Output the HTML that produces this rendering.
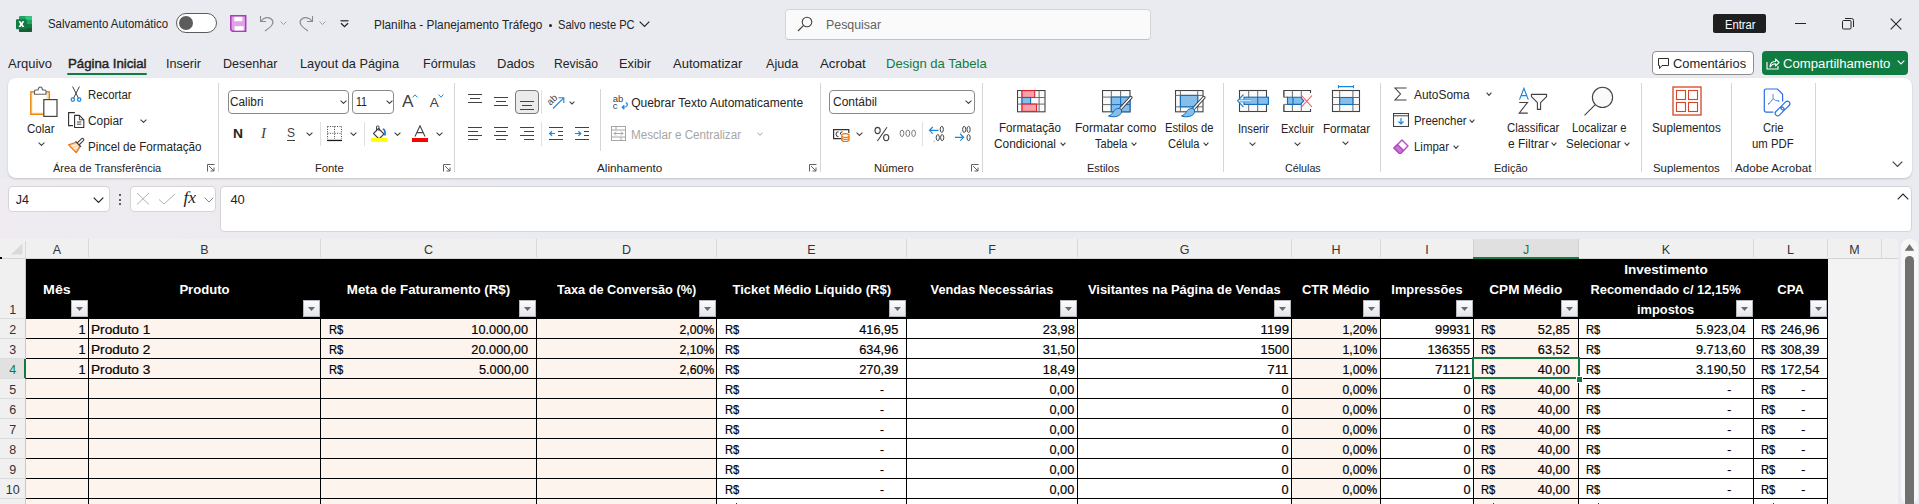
<!DOCTYPE html>
<html><head><meta charset="utf-8">
<style>
html,body{margin:0;padding:0;}
body{width:1919px;height:504px;overflow:hidden;position:relative;background:#e9ebf1;font-family:"Liberation Sans",sans-serif;}
.t{position:absolute;white-space:nowrap;line-height:1;}
.d{-webkit-text-stroke:0.2px #000;}
.r{position:absolute;}
</style></head><body>
<svg class="r" style="left:16px;top:15px;" width="17" height="17" viewBox="0 0 17 17">
<rect x="3" y="1" width="13" height="16" rx="1" fill="#21a366"/>
<rect x="9.5" y="1" width="6.5" height="4" fill="#33c481"/>
<rect x="3" y="9" width="13" height="4" fill="#107c41"/>
<path d="M3 13 H16 V16 Q16 17 15 17 H4 Q3 17 3 16 Z" fill="#185c37"/>
<rect x="0" y="4.2" width="10.8" height="10" rx="0.8" fill="#107c41"/>
<path d="M2.5 6.3 H4.6 L5.4 8 L6.2 6.3 H8.3 L6.6 9.2 L8.3 12.1 H6.2 L5.4 10.4 L4.6 12.1 H2.5 L4.2 9.2 Z" fill="#fff"/>
</svg>
<span class="t" style="left:48.00px;top:18.44px;font-size:12px;color:#242424;transform:scaleX(0.9519);transform-origin:left;">Salvamento Automático</span>
<div class="r" style="left:176px;top:13px;width:41px;height:20px;background:#fff;border:1px solid #5c5c5c;border-radius:10px;box-sizing:border-box;"></div>
<div class="r" style="left:179px;top:16px;width:14px;height:14px;background:#5c5c5c;border-radius:50%;"></div>
<svg class="r" style="left:230px;top:15px;" width="17" height="17" viewBox="0 0 17 17">
<path d="M0.8 0.8 H15.7 V16.2 H2.3 L0.8 14.7 Z" fill="#dfa3e6" stroke="#a93bb8" stroke-width="1.5"/>
<rect x="4.3" y="1.8" width="8" height="4.4" fill="#fff"/>
<rect x="4.6" y="11.2" width="9" height="4.3" fill="#fff"/>
</svg>
<svg class="r" style="left:259px;top:15px;" width="16" height="17" viewBox="0 0 16 17"><path d="M1.5 1 V6.5 H7" fill="none" stroke="#8a8a8a" stroke-width="1.1"/><path d="M1.8 6.3 C5 2 10 1.5 12.8 4.5 C15.5 7.5 13.5 11 6 16" fill="none" stroke="#8a8a8a" stroke-width="1.1"/></svg>
<svg class="r" style="left:280px;top:21px;" width="7" height="4" viewBox="0 0 7 4"><path d="M0.5 0.5 L3.5 3.5 L6.5 0.5" fill="none" stroke="#a0a0a0" stroke-width="1"/></svg>
<svg class="r" style="left:298px;top:15px;" width="16" height="17" viewBox="0 0 16 17"><path d="M14.5 1 V6.5 H9" fill="none" stroke="#8a8a8a" stroke-width="1.1"/><path d="M14.2 6.3 C11 2 6 1.5 3.2 4.5 C0.5 7.5 2.5 11 10 16" fill="none" stroke="#8a8a8a" stroke-width="1.1"/></svg>
<svg class="r" style="left:319px;top:21px;" width="7" height="4" viewBox="0 0 7 4"><path d="M0.5 0.5 L3.5 3.5 L6.5 0.5" fill="none" stroke="#a0a0a0" stroke-width="1"/></svg>
<svg class="r" style="left:340px;top:20px;" width="9" height="8" viewBox="0 0 9 8"><path d="M0.5 0.8 H8.5" stroke="#242424" stroke-width="1.2"/><path d="M1 3.2 L4.5 6.7 L8 3.2" fill="none" stroke="#242424" stroke-width="1.3"/></svg>
<span class="t" style="left:374.20px;top:18.62px;font-size:12.5px;color:#242424;transform:scaleX(0.9462);transform-origin:left;">Planilha - Planejamento Tráfego</span>
<div class="r" style="left:548.9px;top:24px;width:3px;height:3px;background:#242424;border-radius:50%;"></div>
<span class="t" style="left:558.10px;top:18.62px;font-size:12.5px;color:#242424;transform:scaleX(0.8891);transform-origin:left;">Salvo neste PC</span>
<svg class="r" style="left:639px;top:21px;" width="11" height="7" viewBox="0 0 11 7"><path d="M0.7 0.7 L5.5 5.5 L10.3 0.7" fill="none" stroke="#242424" stroke-width="1.2"/></svg>
<div class="r" style="left:785px;top:9px;width:366px;height:31px;background:#fafafa;border:1px solid #d6d6d6;border-bottom-color:#c2c2c2;border-radius:4px;box-sizing:border-box;"></div>
<svg class="r" style="left:797px;top:16px;" width="16" height="16" viewBox="0 0 16 16"><circle cx="10" cy="6" r="4.8" fill="none" stroke="#424242" stroke-width="1.1"/><path d="M6.6 9.4 L1 15" stroke="#424242" stroke-width="1.2"/></svg>
<span class="t" style="left:826.00px;top:18.72px;font-size:12.5px;color:#616161;transform:scaleX(0.9895);transform-origin:left;">Pesquisar</span>
<div class="r" style="left:1713px;top:14px;width:53px;height:19px;background:#1f1f1f;border-radius:2px;"></div>
<span class="t" style="left:1724.60px;top:19.14px;font-size:12px;color:#ffffff;transform:scaleX(0.9304);transform-origin:left;">Entrar</span>
<div class="r" style="left:1795px;top:23px;width:11px;height:1px;background:#242424;"></div>
<svg class="r" style="left:1842px;top:18px;" width="12" height="12" viewBox="0 0 12 12"><rect x="0.5" y="2.5" width="8.5" height="8.5" rx="1" fill="none" stroke="#242424" stroke-width="1"/><path d="M3 0.5 H9.5 Q11.5 0.5 11.5 2.5 V9" fill="none" stroke="#242424" stroke-width="1"/></svg>
<svg class="r" style="left:1890px;top:18px;" width="12" height="12" viewBox="0 0 12 12"><path d="M0.7 0.7 L11.3 11.3 M11.3 0.7 L0.7 11.3" stroke="#242424" stroke-width="1.1"/></svg>
<span class="t" style="left:8.00px;top:56.70px;font-size:13px;color:#242424;">Arquivo</span>
<span class="t" style="left:67.50px;top:56.70px;font-size:13px;color:#242424;transform:scaleX(1.0152);transform-origin:left;-webkit-text-stroke:0.45px #242424;">Página Inicial</span>
<span class="t" style="left:166.00px;top:56.70px;font-size:13px;color:#242424;transform:scaleX(0.9691);transform-origin:left;">Inserir</span>
<span class="t" style="left:223.00px;top:56.70px;font-size:13px;color:#242424;transform:scaleX(0.9669);transform-origin:left;">Desenhar</span>
<span class="t" style="left:300.00px;top:56.70px;font-size:13px;color:#242424;transform:scaleX(0.9784);transform-origin:left;">Layout da Página</span>
<span class="t" style="left:422.50px;top:56.70px;font-size:13px;color:#242424;transform:scaleX(0.9691);transform-origin:left;">Fórmulas</span>
<span class="t" style="left:497.00px;top:56.70px;font-size:13px;color:#242424;">Dados</span>
<span class="t" style="left:554.00px;top:56.70px;font-size:13px;color:#242424;transform:scaleX(0.9369);transform-origin:left;">Revisão</span>
<span class="t" style="left:619.00px;top:56.70px;font-size:13px;color:#242424;transform:scaleX(0.9844);transform-origin:left;">Exibir</span>
<span class="t" style="left:673.00px;top:56.70px;font-size:13px;color:#242424;">Automatizar</span>
<span class="t" style="left:765.70px;top:56.70px;font-size:13px;color:#242424;transform:scaleX(0.9715);transform-origin:left;">Ajuda</span>
<span class="t" style="left:820.00px;top:56.70px;font-size:13px;color:#242424;transform:scaleX(1.0201);transform-origin:left;">Acrobat</span>
<span class="t" style="left:886.00px;top:56.70px;font-size:13px;color:#107c41;transform:scaleX(1.0053);transform-origin:left;">Design da Tabela</span>
<div class="r" style="left:67px;top:73px;width:80px;height:2px;background:#107c41;border-radius:1px;"></div>
<div class="r" style="left:1652px;top:51px;width:102px;height:24px;background:#ffffff;border:1px solid #8f8f8f;border-radius:4px;box-sizing:border-box;"></div>
<svg class="r" style="left:1657px;top:57px;" width="13" height="13" viewBox="0 0 13 13"><path d="M1.5 1.5 H11.5 V8.5 H5 L2.5 11.5 V8.5 H1.5 Z" fill="none" stroke="#242424" stroke-width="0.95"/></svg>
<span class="t" style="left:1673.40px;top:57.92px;font-size:12.5px;color:#242424;transform:scaleX(1.0316);transform-origin:left;">Comentários</span>
<div class="r" style="left:1762px;top:51px;width:146px;height:24px;background:#107c41;border-radius:4px;"></div>
<svg class="r" style="left:1766px;top:57px;" width="14" height="13" viewBox="0 0 14 13"><path d="M1 5 V12 H12 V9" fill="none" stroke="#fff" stroke-width="1.1"/><path d="M4 10 C4 6 6.5 4.5 9.5 4.5 V2 L13 5.5 L9.5 9 V6.7 C7 6.7 5.5 7.5 4 10 Z" fill="none" stroke="#fff" stroke-width="1.1" stroke-linejoin="round"/></svg>
<span class="t" style="left:1783.20px;top:57.92px;font-size:12.5px;color:#ffffff;transform:scaleX(1.0517);transform-origin:left;">Compartilhamento</span>
<svg class="r" style="left:1897px;top:60px;" width="8" height="5" viewBox="0 0 8 5"><path d="M0.7 0.7 L4 4 L7.3 0.7" fill="none" stroke="#fff" stroke-width="1.2"/></svg>
<div class="r" style="left:0px;top:178px;width:700px;height:61px;background:linear-gradient(90deg, rgba(244,236,240,.55), rgba(244,236,240,0));"></div>
<div class="r" style="left:8px;top:78px;width:1904px;height:100px;background:#ffffff;border-radius:8px;box-shadow:0 1px 2px rgba(0,0,0,.18);"></div>
<div class="r" style="left:218px;top:83px;width:1px;height:89px;background:#d6d6d6;"></div>
<div class="r" style="left:454px;top:83px;width:1px;height:89px;background:#d6d6d6;"></div>
<div class="r" style="left:600px;top:89px;width:1px;height:62px;background:#d6d6d6;"></div>
<div class="r" style="left:820px;top:83px;width:1px;height:89px;background:#d6d6d6;"></div>
<div class="r" style="left:982px;top:83px;width:1px;height:89px;background:#d6d6d6;"></div>
<div class="r" style="left:1223px;top:83px;width:1px;height:89px;background:#d6d6d6;"></div>
<div class="r" style="left:1380px;top:83px;width:1px;height:89px;background:#d6d6d6;"></div>
<div class="r" style="left:1641px;top:83px;width:1px;height:89px;background:#d6d6d6;"></div>
<div class="r" style="left:1731px;top:83px;width:1px;height:89px;background:#d6d6d6;"></div>
<div class="r" style="left:1815px;top:83px;width:1px;height:89px;background:#d6d6d6;"></div>
<svg class="r" style="left:29px;top:86px;" width="29" height="31" viewBox="0 0 29 31">
<rect x="1.8" y="5.8" width="18.5" height="22.5" fill="#fde3b8" stroke="#e8860f" stroke-width="1.4"/>
<rect x="3.5" y="7.5" width="14" height="19" fill="#fff"/>
<path d="M5.5 8.2 V5 Q5.5 4 6.5 4 H9 Q9.5 1 11.3 1 Q13.2 1 13.6 4 H16 Q17 4 17 5 V8.2 Z" fill="#fff" stroke="#616161" stroke-width="1.1"/>
<rect x="14.8" y="13.6" width="13.2" height="16.8" fill="#fff" stroke="#424242" stroke-width="1.2"/>
</svg>
<span class="t" style="left:27.40px;top:122.84px;font-size:12px;color:#242424;transform:scaleX(0.9625);transform-origin:left;">Colar</span>
<svg class="r" style="left:38px;top:142px;" width="7" height="4" viewBox="0 0 7 4"><path d="M0.6 0.6 L3.5 3.4 L6.4 0.6" fill="none" stroke="#424242" stroke-width="1.1"/></svg>
<svg class="r" style="left:70px;top:86px;" width="12" height="16" viewBox="0 0 12 16">
<path d="M2.6 0.5 L8.6 12.5 M9.4 0.5 L3.4 12.5" stroke="#424242" stroke-width="1" fill="none"/>
<circle cx="2.8" cy="13.6" r="1.7" fill="none" stroke="#1a86d9" stroke-width="1.2"/>
<circle cx="9.2" cy="13.6" r="1.7" fill="none" stroke="#1a86d9" stroke-width="1.2"/>
</svg>
<span class="t" style="left:88.30px;top:89.34px;font-size:12px;color:#242424;transform:scaleX(0.9454);transform-origin:left;">Recortar</span>
<svg class="r" style="left:62px;top:108px;" width="30" height="50" viewBox="0 0 30 50">
<g transform="translate(-62 -108)">
<path d="M74.9 112.6 H68.6 V125.6 H73" fill="none" stroke="#303030" stroke-width="1.1"/>
<path d="M74.6 115.4 H79.4 L83.8 119.8 V127.5 H74.6 Z" fill="#fff" stroke="#303030" stroke-width="1.1" stroke-linejoin="round"/>
<path d="M79.4 115.4 V119.8 H83.8 M76.9 122 H81.3 M76.9 124.2 H81.3" fill="none" stroke="#303030" stroke-width=".9"/>
</g>
<g transform="translate(-62 -108)">
<path d="M68.6 144.8 L76.4 142.2 L80.2 146.4 L76.2 152.6 Z" fill="#fbd3a8" stroke="#e8700a" stroke-width="1.2" stroke-linejoin="round"/>
<path d="M71.5 146.2 L77.5 144.8 M73.5 149 L78 146.8" stroke="#fff" stroke-width="1"/>
<path d="M77 143.2 L81.5 138.8 Q82.6 137.9 83.5 138.8 Q84.3 139.7 83.4 140.7 L79 145" fill="#fff" stroke="#424242" stroke-width="1.1" stroke-linejoin="round"/>
<path d="M75.6 141.4 L81 146.8" stroke="#424242" stroke-width="1.2"/>
</g>
</svg>
<span class="t" style="left:88.30px;top:115.04px;font-size:12px;color:#242424;transform:scaleX(0.9902);transform-origin:left;">Copiar</span>
<svg class="r" style="left:140px;top:119px;" width="7" height="4" viewBox="0 0 7 4"><path d="M0.6 0.6 L3.5 3.4 L6.4 0.6" fill="none" stroke="#424242" stroke-width="1.1"/></svg>
<span class="t" style="left:88.30px;top:141.04px;font-size:12px;color:#242424;transform:scaleX(0.9724);transform-origin:left;">Pincel de Formatação</span>
<span class="t" style="left:53.00px;top:162.69px;font-size:11px;color:#242424;">Área de Transferência</span>
<svg class="r" style="left:207px;top:164px;" width="8" height="8" viewBox="0 0 8 8"><path d="M0.5 7.5 V0.5 H7.5 M2 2 L7 7 M7 3.5 V7 H3.5" fill="none" stroke="#616161" stroke-width="1"/></svg>
<div class="r" style="left:228px;top:90px;width:121px;height:24px;background:#fff;border:1px solid #8a8a8a;border-radius:4px;box-sizing:border-box;"></div>
<span class="t" style="left:230.40px;top:96.34px;font-size:12px;color:#242424;transform:scaleX(0.9851);transform-origin:left;">Calibri</span>
<svg class="r" style="left:340px;top:100px;" width="7" height="4" viewBox="0 0 7 4"><path d="M0.6 0.6 L3.5 3.4 L6.4 0.6" fill="none" stroke="#424242" stroke-width="1.1"/></svg>
<div class="r" style="left:352px;top:90px;width:42px;height:24px;background:#fff;border:1px solid #8a8a8a;border-radius:4px;box-sizing:border-box;"></div>
<span class="t" style="left:355.80px;top:95.92px;font-size:12.5px;color:#242424;transform:scaleX(0.8478);transform-origin:left;">11</span>
<svg class="r" style="left:386px;top:100px;" width="7" height="4" viewBox="0 0 7 4"><path d="M0.6 0.6 L3.5 3.4 L6.4 0.6" fill="none" stroke="#424242" stroke-width="1.1"/></svg>
<span class="t" style="left:402.00px;top:92.61px;font-size:17px;color:#424242;transform:scaleX(1.0142);transform-origin:left;">A</span>
<svg class="r" style="left:412px;top:94px;" width="6" height="4" viewBox="0 0 6 4"><path d="M0.6 3.4 L3 0.8 L5.4 3.4" fill="none" stroke="#1a86d9" stroke-width="1"/></svg>
<span class="t" style="left:429.80px;top:95.57px;font-size:13.5px;color:#424242;">A</span>
<svg class="r" style="left:438px;top:94px;" width="6" height="4" viewBox="0 0 6 4"><path d="M0.6 0.6 L3 3.2 L5.4 0.6" fill="none" stroke="#1a86d9" stroke-width="1"/></svg>
<span class="t" style="left:233.40px;top:127.00px;font-size:13px;color:#242424;font-weight:bold;transform:scaleX(1.0651);transform-origin:left;">N</span>
<span class="t" style="left:261px;top:125.5px;font-size:15px;color:#424242;font-family:'Liberation Serif',serif;font-style:italic;">I</span>
<span class="t" style="left:287.00px;top:127.02px;font-size:12.5px;color:#424242;transform:scaleX(0.9595);transform-origin:left;">S</span>
<div class="r" style="left:287px;top:140px;width:8px;height:1px;background:#424242;"></div>
<svg class="r" style="left:306px;top:132px;" width="7" height="4" viewBox="0 0 7 4"><path d="M0.6 0.6 L3.5 3.4 L6.4 0.6" fill="none" stroke="#424242" stroke-width="1.1"/></svg>
<div class="r" style="left:320px;top:122px;width:1px;height:24px;background:#e0e0e0;"></div>
<svg class="r" style="left:326px;top:125px;" width="17" height="17" viewBox="0 0 17 17">
<path d="M1.5 1.5 H15.5 M1.5 8.3 H15.5 M1.5 1.5 V14 M8.5 1.5 V14 M15.5 1.5 V14" fill="none" stroke="#424242" stroke-width="1" stroke-dasharray="1 1.4"/>
<rect x="1" y="14.8" width="15" height="1.3" fill="#1a1a1a"/>
</svg>
<svg class="r" style="left:350px;top:132px;" width="7" height="4" viewBox="0 0 7 4"><path d="M0.6 0.6 L3.5 3.4 L6.4 0.6" fill="none" stroke="#424242" stroke-width="1.1"/></svg>
<div class="r" style="left:364px;top:122px;width:1px;height:24px;background:#e0e0e0;"></div>
<svg class="r" style="left:371px;top:125px;" width="17" height="17" viewBox="0 0 17 17">
<path d="M2.5 8.5 L7.5 3.5 L13 9 L8 14 Z" fill="#fff" stroke="#424242" stroke-width="1.1" stroke-linejoin="round"/>
<path d="M5.5 5.5 V2 Q5.5 0.8 6.7 0.8 Q8 0.8 8 2 V6" fill="none" stroke="#424242" stroke-width="1"/>
<path d="M11.8 4 Q14 4.5 14 7.5 V10.5" fill="none" stroke="#1a6fc0" stroke-width="1.6"/>
<rect x="0" y="13" width="16" height="3.8" fill="#ffff00"/>
</svg>
<svg class="r" style="left:394px;top:132px;" width="7" height="4" viewBox="0 0 7 4"><path d="M0.6 0.6 L3.5 3.4 L6.4 0.6" fill="none" stroke="#424242" stroke-width="1.1"/></svg>
<svg class="r" style="left:414px;top:125px;" width="12" height="12" viewBox="0 0 12 12"><path d="M1 11.5 L6 0.8 L11 11.5 M2.8 7.6 H9.2" fill="none" stroke="#424242" stroke-width="1.1"/></svg>
<div class="r" style="left:412px;top:138px;width:16px;height:4px;background:#ff0000;"></div>
<svg class="r" style="left:436px;top:132px;" width="7" height="4" viewBox="0 0 7 4"><path d="M0.6 0.6 L3.5 3.4 L6.4 0.6" fill="none" stroke="#424242" stroke-width="1.1"/></svg>
<span class="t" style="left:314.60px;top:162.69px;font-size:11px;color:#242424;transform:scaleX(1.0204);transform-origin:left;">Fonte</span>
<svg class="r" style="left:443px;top:164px;" width="8" height="8" viewBox="0 0 8 8"><path d="M0.5 7.5 V0.5 H7.5 M2 2 L7 7 M7 3.5 V7 H3.5" fill="none" stroke="#616161" stroke-width="1"/></svg>
<div class="r" style="left:468px;top:94px;width:14px;height:1px;background:#424242;"></div>
<div class="r" style="left:470px;top:98px;width:10px;height:1px;background:#424242;"></div>
<div class="r" style="left:468px;top:102px;width:14px;height:1px;background:#424242;"></div>
<div class="r" style="left:494px;top:97px;width:14px;height:1px;background:#424242;"></div>
<div class="r" style="left:496px;top:101px;width:10px;height:1px;background:#424242;"></div>
<div class="r" style="left:494px;top:105px;width:14px;height:1px;background:#424242;"></div>
<div class="r" style="left:515px;top:90px;width:24px;height:24px;background:#ebebeb;border:1px solid #7a7a7a;border-radius:4px;box-sizing:border-box;"></div>
<div class="r" style="left:520px;top:101px;width:14px;height:1px;background:#424242;"></div>
<div class="r" style="left:522px;top:105px;width:10px;height:1px;background:#424242;"></div>
<div class="r" style="left:520px;top:109px;width:14px;height:1px;background:#424242;"></div>
<div class="r" style="left:541px;top:90px;width:1px;height:24px;background:#e0e0e0;"></div>
<svg class="r" style="left:546px;top:92px;" width="20" height="17" viewBox="0 0 20 17">
<text x="1" y="11" font-family="Liberation Sans" font-size="9.5" fill="#424242" transform="rotate(-45 6 8)">ab</text>
<path d="M7 16.5 L17.8 5.8 M12.5 5.8 H17.8 V11" fill="none" stroke="#1a86d9" stroke-width="1.1"/>
</svg>
<svg class="r" style="left:569px;top:101px;" width="6" height="3.5" viewBox="0 0 6 3.5"><path d="M0.6 0.6 L3.0 2.9 L5.4 0.6" fill="none" stroke="#424242" stroke-width="1.1"/></svg>
<div class="r" style="left:468px;top:127px;width:14px;height:1px;background:#424242;"></div>
<div class="r" style="left:468px;top:131px;width:10px;height:1px;background:#424242;"></div>
<div class="r" style="left:468px;top:135px;width:14px;height:1px;background:#424242;"></div>
<div class="r" style="left:468px;top:139px;width:10px;height:1px;background:#424242;"></div>
<div class="r" style="left:494px;top:127px;width:14px;height:1px;background:#424242;"></div>
<div class="r" style="left:496px;top:131px;width:10px;height:1px;background:#424242;"></div>
<div class="r" style="left:494px;top:135px;width:14px;height:1px;background:#424242;"></div>
<div class="r" style="left:496px;top:139px;width:10px;height:1px;background:#424242;"></div>
<div class="r" style="left:520px;top:127px;width:14px;height:1px;background:#424242;"></div>
<div class="r" style="left:524px;top:131px;width:10px;height:1px;background:#424242;"></div>
<div class="r" style="left:520px;top:135px;width:14px;height:1px;background:#424242;"></div>
<div class="r" style="left:524px;top:139px;width:10px;height:1px;background:#424242;"></div>
<div class="r" style="left:541px;top:122px;width:1px;height:24px;background:#e0e0e0;"></div>
<div class="r" style="left:549px;top:127px;width:14px;height:1px;background:#424242;"></div>
<div class="r" style="left:558px;top:131px;width:5px;height:1px;background:#424242;"></div>
<div class="r" style="left:558px;top:135px;width:5px;height:1px;background:#424242;"></div>
<div class="r" style="left:549px;top:139px;width:14px;height:1px;background:#424242;"></div>
<div class="r" style="left:575px;top:127px;width:14px;height:1px;background:#424242;"></div>
<div class="r" style="left:584px;top:131px;width:5px;height:1px;background:#424242;"></div>
<div class="r" style="left:584px;top:135px;width:5px;height:1px;background:#424242;"></div>
<div class="r" style="left:575px;top:139px;width:14px;height:1px;background:#424242;"></div>
<svg class="r" style="left:546px;top:128px;" width="50" height="12" viewBox="0 0 50 12">
<path d="M9 5.5 H3.8 M6 3.2 L3.6 5.5 L6 7.8" fill="none" stroke="#1a86d9" stroke-width="1.2"/>
<path d="M29 5.5 H34.6 M32.4 3.2 L34.8 5.5 L32.4 7.8" fill="none" stroke="#1a86d9" stroke-width="1.2"/>
</svg>
<svg class="r" style="left:612px;top:93px;" width="17" height="17" viewBox="0 0 17 17">
<text x="0.8" y="8.5" font-family="Liberation Sans" font-size="9.5" fill="#424242">ab</text>
<text x="0.8" y="15.8" font-family="Liberation Sans" font-size="9.5" fill="#424242">c</text>
<path d="M13.8 9.5 Q16 10.5 15 12.8 Q14 14.5 10.5 14.3 M12.3 12.3 L10.2 14.3 L12.3 16.3" fill="none" stroke="#1a86d9" stroke-width="1.2"/>
</svg>
<span class="t" style="left:631.20px;top:97.14px;font-size:12px;color:#242424;">Quebrar Texto Automaticamente</span>
<svg class="r" style="left:611px;top:126px;" width="15" height="15" viewBox="0 0 15 15">
<rect x="0.5" y="0.5" width="14" height="14" fill="none" stroke="#a6a6a6" stroke-width="1"/>
<path d="M0.5 4 H14.5 M0.5 11 H14.5 M5 0.5 V4 M10 11 V14.5 M3 7.5 H12 M5 5.5 L3 7.5 L5 9.5 M10 5.5 L12 7.5 L10 9.5" fill="none" stroke="#a6a6a6" stroke-width="1"/>
</svg>
<span class="t" style="left:631.20px;top:129.14px;font-size:12px;color:#a6a6a6;transform:scaleX(0.9704);transform-origin:left;">Mesclar e Centralizar</span>
<svg class="r" style="left:757px;top:132px;" width="6" height="4" viewBox="0 0 6 4"><path d="M0.6 0.6 L3.0 3.4 L5.4 0.6" fill="none" stroke="#a6a6a6" stroke-width="1"/></svg>
<span class="t" style="left:597.00px;top:162.69px;font-size:11px;color:#242424;transform:scaleX(1.0679);transform-origin:left;">Alinhamento</span>
<svg class="r" style="left:809px;top:164px;" width="8" height="8" viewBox="0 0 8 8"><path d="M0.5 7.5 V0.5 H7.5 M2 2 L7 7 M7 3.5 V7 H3.5" fill="none" stroke="#616161" stroke-width="1"/></svg>
<div class="r" style="left:829px;top:90px;width:146px;height:24px;background:#fff;border:1px solid #8a8a8a;border-radius:4px;box-sizing:border-box;"></div>
<span class="t" style="left:832.50px;top:95.92px;font-size:12.5px;color:#242424;transform:scaleX(0.9595);transform-origin:left;">Contábil</span>
<svg class="r" style="left:965px;top:100px;" width="7" height="4" viewBox="0 0 7 4"><path d="M0.6 0.6 L3.5 3.4 L6.4 0.6" fill="none" stroke="#424242" stroke-width="1.1"/></svg>
<svg class="r" style="left:826px;top:120px;" width="150" height="30" viewBox="0 0 150 30">
<g transform="translate(-826 -120)">
<path d="M841.5 138.6 H833.6 V129.6 H848.8 V133" fill="none" stroke="#303030" stroke-width="1.2"/>
<path d="M838.5 131.8 Q836 131.6 836 134.2 Q836 136.8 838.5 136.6 M842.5 131.8 Q840.3 131.6 840.3 134.5" fill="none" stroke="#303030" stroke-width="1"/>
<path d="M841.8 134.6 Q845.4 132.6 849 134.6 V140.4 Q845.4 142.6 841.8 140.4 Z" fill="#fff" stroke="#e8700a" stroke-width="1.2"/>
<path d="M841.8 136.6 Q845.4 138.6 849 136.6 M841.8 138.5 Q845.4 140.5 849 138.5" fill="none" stroke="#e8700a" stroke-width="1.1"/>
</g>
<g transform="translate(-826 -120)">
<ellipse cx="877.6" cy="130.5" rx="2.6" ry="3.1" fill="none" stroke="#424242" stroke-width="1.1"/>
<ellipse cx="886.2" cy="137.6" rx="2.6" ry="3.1" fill="none" stroke="#424242" stroke-width="1.1"/>
<path d="M887 127.2 L877.4 141" stroke="#424242" stroke-width="1.1"/>
</g>
<g transform="translate(-826 -120)" fill="none" stroke="#7a7a7a" stroke-width="1">
<ellipse cx="902" cy="133.3" rx="1.9" ry="3.2"/><ellipse cx="907.8" cy="133.3" rx="1.9" ry="3.2"/><ellipse cx="913.6" cy="133.3" rx="1.9" ry="3.2"/>
</g>
<g transform="translate(-826 -120)" fill="none" stroke="#424242" stroke-width="1">
<ellipse cx="941.8" cy="129.4" rx="1.6" ry="3"/>
<ellipse cx="937.8" cy="137.6" rx="1.6" ry="3"/><ellipse cx="942.2" cy="137.6" rx="1.6" ry="3"/>
<path d="M934.7 140.8 L934.2 141.5"/>
<ellipse cx="964.2" cy="129.4" rx="1.6" ry="3"/><ellipse cx="968.6" cy="129.4" rx="1.6" ry="3"/>
<path d="M961.1 132.6 L960.6 133.3"/>
<ellipse cx="968.6" cy="137.6" rx="1.6" ry="3"/>
</g>
<g transform="translate(-826 -120)" fill="none" stroke="#1a86d9" stroke-width="1.2">
<path d="M938.5 130.3 H929.5 M932.8 127 L929.5 130.3 L932.8 133.6"/>
<path d="M955 137.3 H963.6 M960.3 134 L963.6 137.3 L960.3 140.6"/>
</g>
</svg>
<svg class="r" style="left:856px;top:132px;" width="7" height="4" viewBox="0 0 7 4"><path d="M0.6 0.6 L3.5 3.4 L6.4 0.6" fill="none" stroke="#424242" stroke-width="1.1"/></svg>
<div class="r" style="left:922px;top:122px;width:1px;height:24px;background:#e0e0e0;"></div>
<span class="t" style="left:873.60px;top:162.69px;font-size:11px;color:#242424;transform:scaleX(1.0148);transform-origin:left;">Número</span>
<svg class="r" style="left:971px;top:164px;" width="8" height="8" viewBox="0 0 8 8"><path d="M0.5 7.5 V0.5 H7.5 M2 2 L7 7 M7 3.5 V7 H3.5" fill="none" stroke="#616161" stroke-width="1"/></svg>
<svg class="r" style="left:1017px;top:90px;" width="29" height="23" viewBox="0 0 29 23">
<rect x="0.5" y="0.5" width="27.5" height="21.3" fill="#fafafa" stroke="#424242" stroke-width="1.1"/>
<path d="M0.5 7.5 H28 M0.5 14.1 H28 M22.1 0.5 V21.8 M5 0.5 V21.8" fill="none" stroke="#6b6b6b" stroke-width="1"/>
<rect x="5" y="0.6" width="12.7" height="6.9" fill="#f7a1a8" stroke="#e0202e" stroke-width="1.1"/>
<rect x="5" y="7.5" width="8.6" height="6.6" fill="#86bde9" stroke="#0f6cbd" stroke-width="1.1"/>
<rect x="5" y="14.1" width="14.6" height="7.3" fill="#f7a1a8" stroke="#e0202e" stroke-width="1.1"/>
</svg>
<span class="t" style="left:999.20px;top:122.14px;font-size:12px;color:#242424;transform:scaleX(0.9684);transform-origin:left;">Formatação</span>
<span class="t" style="left:993.50px;top:138.34px;font-size:12px;color:#242424;transform:scaleX(0.9888);transform-origin:left;">Condicional</span>
<svg class="r" style="left:1060px;top:142px;" width="6" height="4" viewBox="0 0 6 4"><path d="M0.6 0.6 L3.0 3.4 L5.4 0.6" fill="none" stroke="#424242" stroke-width="1.1"/></svg>
<svg class="r" style="left:1102px;top:90px;" width="31" height="28" viewBox="0 0 31 28">
<rect x="0.5" y="0.5" width="27.5" height="21.3" fill="#fafafa" stroke="#424242" stroke-width="1.1"/>
<path d="M0.5 7.1 H28 M0.5 14.6 H28 M9.3 0.5 V21.8 M18.6 0.5 V21.8" fill="none" stroke="#6b6b6b" stroke-width="1"/>
<rect x="9.3" y="7.1" width="18.7" height="14.7" fill="#86bde9" stroke="#0f6cbd" stroke-width="1.1"/>
<path d="M9.3 14.6 H28 M18.6 7.1 V21.8" stroke="#0f6cbd" stroke-width="1"/>
<path d="M28.8 7.6 L19 18.2" stroke="#424242" stroke-width="3.4" stroke-linecap="round"/>
<path d="M28.8 7.6 L19 18.2" stroke="#fff" stroke-width="1.4" stroke-linecap="round"/>
<path d="M17.5 18.5 Q20.5 19.5 19.5 22.5 Q18 26.5 11.5 26.8 Q9 26.8 6.5 26 Q9.5 25 11 22.5 Q13 18 17.5 18.5 Z" fill="#86bde9" stroke="#0f6cbd" stroke-width="1"/>
</svg>
<span class="t" style="left:1075.00px;top:122.14px;font-size:12px;color:#242424;">Formatar como</span>
<span class="t" style="left:1094.70px;top:138.34px;font-size:12px;color:#242424;transform:scaleX(0.9192);transform-origin:left;">Tabela</span>
<svg class="r" style="left:1131px;top:142px;" width="6" height="4" viewBox="0 0 6 4"><path d="M0.6 0.6 L3.0 3.4 L5.4 0.6" fill="none" stroke="#424242" stroke-width="1.1"/></svg>
<svg class="r" style="left:1175px;top:90px;" width="31" height="28" viewBox="0 0 31 28">
<rect x="0.5" y="0.5" width="27.5" height="21.3" fill="#fafafa" stroke="#424242" stroke-width="1.1"/>
<path d="M0.5 5.4 H28 M0.5 16.8 H28 M5.4 0.5 V21.8 M22.7 0.5 V21.8" fill="none" stroke="#6b6b6b" stroke-width="1"/>
<rect x="5.4" y="5.4" width="17.3" height="11.4" fill="#86bde9" stroke="#0f6cbd" stroke-width="1.1"/>
<path d="M28.8 7.6 L19 18.2" stroke="#424242" stroke-width="3.4" stroke-linecap="round"/>
<path d="M28.8 7.6 L19 18.2" stroke="#fff" stroke-width="1.4" stroke-linecap="round"/>
<path d="M17.5 18.5 Q20.5 19.5 19.5 22.5 Q18 26.5 11.5 26.8 Q9 26.8 6.5 26 Q9.5 25 11 22.5 Q13 18 17.5 18.5 Z" fill="#86bde9" stroke="#0f6cbd" stroke-width="1"/>
</svg>
<span class="t" style="left:1164.50px;top:122.14px;font-size:12px;color:#242424;transform:scaleX(0.9323);transform-origin:left;">Estilos de</span>
<span class="t" style="left:1167.50px;top:138.34px;font-size:12px;color:#242424;transform:scaleX(0.9260);transform-origin:left;">Célula</span>
<svg class="r" style="left:1203px;top:142px;" width="6" height="4" viewBox="0 0 6 4"><path d="M0.6 0.6 L3.0 3.4 L5.4 0.6" fill="none" stroke="#424242" stroke-width="1.1"/></svg>
<span class="t" style="left:1087.00px;top:162.69px;font-size:11px;color:#242424;">Estilos</span>
<svg class="r" style="left:1230px;top:80px;" width="135" height="35" viewBox="0 0 135 35">
<g transform="translate(-1230 -80)">
<rect x="1239.5" y="90.5" width="27" height="21" fill="#fafafa" stroke="#424242" stroke-width="1.1"/>
<path d="M1248.7 90.5 V111.5 M1257.7 90.5 V111.5" stroke="#6b6b6b" stroke-width="1"/>
<rect x="1244" y="97.2" width="24.4" height="7.2" fill="#86bde9" stroke="#0f6cbd" stroke-width="1.1"/>
<path d="M1257.7 97.2 V104.4" stroke="#0f6cbd" stroke-width="1.1"/>
<path d="M1251 100.8 H1238.5" stroke="#fff" stroke-width="2.6"/>
<path d="M1251 99.8 H1239.5 M1251 101.8 H1239.5" stroke="#1a86d9" stroke-width=".8"/>
<path d="M1243.5 94.5 L1237.6 100.8 L1243.5 107" fill="none" stroke="#1a86d9" stroke-width="1.1"/>
</g>
<g transform="translate(-1230 -80)">
<path d="M1284 97.2 V90.5 H1310.5 V93 M1310.5 109 V111.5 H1284 V104.4" fill="#fafafa" stroke="#424242" stroke-width="1.1"/>
<path d="M1284 90.5 H1310.5 V111.5 H1284 Z" fill="#fafafa"/>
<path d="M1284 97.2 V90.5 H1310.5 V93 M1310.5 109 V111.5 H1284 V104.4" fill="none" stroke="#424242" stroke-width="1.1"/>
<path d="M1292.4 90.5 V111.5 M1301.3 90.5 V111.5 M1284 97.2 H1288 M1284 104.4 H1288" stroke="#6b6b6b" stroke-width="1"/>
<path d="M1287.5 97.2 H1300.5 L1303.8 100.8 L1300.5 104.4 H1287.5 Z" fill="#86bde9" stroke="#0f6cbd" stroke-width="1.1"/>
<path d="M1293 97.2 V104.4" stroke="#0f6cbd" stroke-width="1.1"/>
<path d="M1301.5 95.5 L1312 107 M1312 95.5 L1301.5 107" stroke="#f0505a" stroke-width="1.1"/>
</g>
<g transform="translate(-1230 -80)">
<path d="M1338.5 86.6 H1353.5 M1338.5 85 V88.2 M1353.5 85 V88.2" stroke="#1a86d9" stroke-width="1.1"/>
<rect x="1332.5" y="90.5" width="27" height="21" fill="#fafafa" stroke="#424242" stroke-width="1.1"/>
<path d="M1339.7 90.5 V111.5 M1352.9 90.5 V111.5 M1332.5 97.5 H1359.5 M1332.5 104.5 H1359.5" stroke="#6b6b6b" stroke-width="1"/>
<rect x="1339.7" y="97.5" width="13.2" height="7" fill="#86bde9" stroke="#0f6cbd" stroke-width="1.1"/>
</g>
</svg>
<span class="t" style="left:1237.50px;top:122.84px;font-size:12px;color:#242424;transform:scaleX(0.9299);transform-origin:left;">Inserir</span>
<svg class="r" style="left:1249px;top:142px;" width="7" height="4" viewBox="0 0 7 4"><path d="M0.6 0.6 L3.5 3.4 L6.4 0.6" fill="none" stroke="#424242" stroke-width="1.1"/></svg>
<span class="t" style="left:1280.50px;top:122.84px;font-size:12px;color:#242424;transform:scaleX(0.9165);transform-origin:left;">Excluir</span>
<svg class="r" style="left:1294px;top:142px;" width="7" height="4" viewBox="0 0 7 4"><path d="M0.6 0.6 L3.5 3.4 L6.4 0.6" fill="none" stroke="#424242" stroke-width="1.1"/></svg>
<span class="t" style="left:1322.80px;top:122.84px;font-size:12px;color:#242424;transform:scaleX(0.9657);transform-origin:left;">Formatar</span>
<svg class="r" style="left:1342px;top:141px;" width="7" height="4" viewBox="0 0 7 4"><path d="M0.6 0.6 L3.5 3.4 L6.4 0.6" fill="none" stroke="#424242" stroke-width="1.1"/></svg>
<span class="t" style="left:1284.50px;top:162.69px;font-size:11px;color:#242424;transform:scaleX(0.9732);transform-origin:left;">Células</span>
<svg class="r" style="left:1394px;top:87px;" width="13" height="14" viewBox="0 0 13 14"><path d="M12.5 1 H1 L6.5 7 L1 13 H12.5" fill="none" stroke="#424242" stroke-width="1.1"/></svg>
<span class="t" style="left:1413.50px;top:88.84px;font-size:12px;color:#242424;transform:scaleX(0.9905);transform-origin:left;">AutoSoma</span>
<svg class="r" style="left:1486px;top:92px;" width="6" height="4" viewBox="0 0 6 4"><path d="M0.6 0.6 L3.0 3.4 L5.4 0.6" fill="none" stroke="#424242" stroke-width="1.1"/></svg>
<svg class="r" style="left:1393px;top:113px;" width="16" height="14" viewBox="0 0 16 14">
<rect x="0.5" y="0.5" width="15" height="13" fill="#fff" stroke="#424242" stroke-width="1.1"/>
<path d="M0.5 2.8 H15.5" stroke="#424242" stroke-width="1"/>
<path d="M8 5 V11 M5.5 8.5 L8 11 L10.5 8.5" fill="none" stroke="#1a86d9" stroke-width="1.2"/>
</svg>
<span class="t" style="left:1413.50px;top:115.34px;font-size:12px;color:#242424;transform:scaleX(0.9483);transform-origin:left;">Preencher</span>
<svg class="r" style="left:1469px;top:119px;" width="6" height="4" viewBox="0 0 6 4"><path d="M0.6 0.6 L3.0 3.4 L5.4 0.6" fill="none" stroke="#424242" stroke-width="1.1"/></svg>
<svg class="r" style="left:1393px;top:138px;" width="16" height="16" viewBox="0 0 16 16">
<path d="M1 10 L9 2 L15 8 L7 16 Z" fill="#fff" stroke="#b146c2" stroke-width="1.3" stroke-linejoin="round"/>
<path d="M1 10 L4.5 6.5 L10.5 12.5 L7 16 Z" fill="#c773d3" stroke="#b146c2" stroke-width="1.3" stroke-linejoin="round"/>
</svg>
<span class="t" style="left:1413.50px;top:140.84px;font-size:12px;color:#242424;transform:scaleX(0.9543);transform-origin:left;">Limpar</span>
<svg class="r" style="left:1453px;top:145px;" width="6" height="4" viewBox="0 0 6 4"><path d="M0.6 0.6 L3.0 3.4 L5.4 0.6" fill="none" stroke="#424242" stroke-width="1.1"/></svg>
<svg class="r" style="left:1510px;top:84px;" width="110" height="36" viewBox="0 0 110 36"><g transform="translate(-1510 -84)">
<path d="M1519.5 99.6 L1523.9 88.3 L1528.3 99.6 M1521.1 95.6 H1526.7" fill="none" stroke="#1a86d9" stroke-width="1.15"/>
<path d="M1519.2 102.5 H1527.5 L1519.2 113.1 H1527.8" fill="none" stroke="#424242" stroke-width="1.1"/>
<path d="M1531.4 94.4 H1546.6 V96.6 L1540.6 102.6 V109.4 H1537.4 V102.6 L1531.4 96.6 Z" fill="#fafafa" stroke="#424242" stroke-width="1.1" stroke-linejoin="round"/>
<circle cx="1602.5" cy="97.4" r="10.1" fill="#fafafa" stroke="#424242" stroke-width="1.1"/>
<path d="M1595.3 104.6 L1584.5 115.4" stroke="#424242" stroke-width="1.1"/>
</g></svg>
<span class="t" style="left:1506.60px;top:122.14px;font-size:12px;color:#242424;transform:scaleX(0.9469);transform-origin:left;">Classificar</span>
<span class="t" style="left:1508.00px;top:138.34px;font-size:12px;color:#242424;">e Filtrar</span>
<svg class="r" style="left:1551px;top:142px;" width="6" height="4" viewBox="0 0 6 4"><path d="M0.6 0.6 L3.0 3.4 L5.4 0.6" fill="none" stroke="#424242" stroke-width="1.1"/></svg>
<span class="t" style="left:1571.50px;top:122.14px;font-size:12px;color:#242424;transform:scaleX(0.9392);transform-origin:left;">Localizar e</span>
<span class="t" style="left:1566.00px;top:138.34px;font-size:12px;color:#242424;transform:scaleX(0.9612);transform-origin:left;">Selecionar</span>
<svg class="r" style="left:1624px;top:142px;" width="6" height="4" viewBox="0 0 6 4"><path d="M0.6 0.6 L3.0 3.4 L5.4 0.6" fill="none" stroke="#424242" stroke-width="1.1"/></svg>
<span class="t" style="left:1494.00px;top:162.69px;font-size:11px;color:#242424;">Edição</span>
<svg class="r" style="left:1672px;top:86px;" width="30" height="30" viewBox="0 0 30 30">
<rect x="1" y="1" width="28" height="28" fill="#fff" stroke="#d24726" stroke-width="1.3"/>
<rect x="4.5" y="4.5" width="9" height="9" fill="none" stroke="#d2472a" stroke-width="1.1"/>
<rect x="16.5" y="4.5" width="9" height="9" fill="none" stroke="#d2472a" stroke-width="1.1"/>
<rect x="4.5" y="16.5" width="9" height="9" fill="none" stroke="#d2472a" stroke-width="1.1"/>
<rect x="16.5" y="16.5" width="9" height="9" fill="none" stroke="#d2472a" stroke-width="1.1"/>
</svg>
<span class="t" style="left:1652.00px;top:122.14px;font-size:12px;color:#242424;transform:scaleX(0.9823);transform-origin:left;">Suplementos</span>
<span class="t" style="left:1653.00px;top:162.69px;font-size:11px;color:#242424;transform:scaleX(1.0389);transform-origin:left;">Suplementos</span>
<svg class="r" style="left:1758px;top:84px;" width="40" height="36" viewBox="0 0 40 36">
<path d="M15.4 28.2 H8.3 Q6.3 28.2 6.3 26.2 V7 Q6.3 5 8.3 5 H19.3 L24.6 10.3 V17.5" fill="none" stroke="#2c6fe0" stroke-width="1.2"/>
<path d="M15 10 V14.5 Q13 18.5 10 20.2 M15 14.5 Q17 17 21.2 17.2 M10 20.2 L11.5 19.5 M21.2 17.2 L20 16.2" fill="none" stroke="#2c6fe0" stroke-width=".8"/>
<g transform="rotate(-45 24.5 24.5)">
<rect x="15.2" y="22" width="10.5" height="5" rx="2.5" fill="#fff" stroke="#2c6fe0" stroke-width="1.2"/>
<rect x="23.3" y="22" width="10.5" height="5" rx="2.5" fill="none" stroke="#2c6fe0" stroke-width="1.2"/>
</g>
</svg>
<span class="t" style="left:1763.40px;top:122.14px;font-size:12px;color:#242424;transform:scaleX(0.9363);transform-origin:left;">Crie</span>
<span class="t" style="left:1752.40px;top:138.34px;font-size:12px;color:#242424;transform:scaleX(0.9454);transform-origin:left;">um PDF</span>
<span class="t" style="left:1735.00px;top:162.69px;font-size:11px;color:#242424;transform:scaleX(1.0587);transform-origin:left;">Adobe Acrobat</span>
<svg class="r" style="left:1892px;top:161px;" width="11" height="7" viewBox="0 0 11 7"><path d="M0.7 0.7 L5.5 5.5 L10.3 0.7" fill="none" stroke="#424242" stroke-width="1.2"/></svg>
<div class="r" style="left:8px;top:186px;width:102px;height:26px;background:#ffffff;border:1px solid #d4d4d4;border-radius:4px;box-sizing:border-box;"></div>
<span class="t" style="left:15.70px;top:193.62px;font-size:12.5px;color:#242424;">J4</span>
<svg class="r" style="left:93px;top:197px;" width="11" height="7" viewBox="0 0 11 7"><path d="M0.7 0.7 L5.5 5.5 L10.3 0.7" fill="none" stroke="#242424" stroke-width="1.2"/></svg>
<div class="r" style="left:119px;top:194px;width:2.2px;height:2.2px;background:#333;border-radius:50%;"></div>
<div class="r" style="left:119px;top:198.5px;width:2.2px;height:2.2px;background:#333;border-radius:50%;"></div>
<div class="r" style="left:119px;top:203px;width:2.2px;height:2.2px;background:#333;border-radius:50%;"></div>
<div class="r" style="left:130px;top:186px;width:86px;height:26px;background:#ffffff;border:1px solid #d4d4d4;border-radius:4px;box-sizing:border-box;"></div>
<svg class="r" style="left:136px;top:192px;" width="14" height="13" viewBox="0 0 14 13"><path d="M1 1 L13 12.5 M13 1 L1 12.5" stroke="#b0b0b0" stroke-width="1"/></svg>
<svg class="r" style="left:158px;top:193px;" width="18" height="12" viewBox="0 0 18 12"><path d="M1 6.5 L6 11 L17 1" fill="none" stroke="#b0b0b0" stroke-width="1"/></svg>
<span class="t" style="left:183.5px;top:189px;font-family:'Liberation Serif',serif;font-style:italic;font-size:17.5px;color:#242424;">fx</span>
<svg class="r" style="left:204px;top:197px;" width="10" height="6" viewBox="0 0 10 6"><path d="M0.7 0.7 L5 5 L9.3 0.7" fill="none" stroke="#8a8a8a" stroke-width="1"/></svg>
<div class="r" style="left:220px;top:186px;width:1692px;height:46px;background:#ffffff;border:1px solid #d4d4d4;border-radius:4px;box-sizing:border-box;"></div>
<span class="t" style="left:230.40px;top:193.20px;font-size:13px;color:#242424;">40</span>
<svg class="r" style="left:1897px;top:193px;" width="12" height="7" viewBox="0 0 12 7"><path d="M0.7 6.3 L6 1 L11.3 6.3" fill="none" stroke="#242424" stroke-width="1.1"/></svg>
<div class="r" style="left:0px;top:239px;width:1898px;height:20px;background:#f0f0f0;"></div>
<div class="r" style="left:0px;top:258px;width:1898px;height:1px;background:#d4d4d4;"></div>
<svg class="r" style="left:10px;top:243px;" width="13" height="12" viewBox="0 0 13 12"><path d="M12.5 0.5 V11.5 H1 Z" fill="#dadada"/></svg>
<div class="r" style="left:1473px;top:239px;width:106px;height:18px;background:#e0e0e0;"></div>
<div class="r" style="left:1473px;top:257px;width:106px;height:2px;background:#107c41;"></div>
<div class="r" style="left:88px;top:239px;width:1px;height:18px;background:#d9d9d9;"></div>
<div class="r" style="left:320px;top:239px;width:1px;height:18px;background:#d9d9d9;"></div>
<div class="r" style="left:536px;top:239px;width:1px;height:18px;background:#d9d9d9;"></div>
<div class="r" style="left:716px;top:239px;width:1px;height:18px;background:#d9d9d9;"></div>
<div class="r" style="left:906px;top:239px;width:1px;height:18px;background:#d9d9d9;"></div>
<div class="r" style="left:1077px;top:239px;width:1px;height:18px;background:#d9d9d9;"></div>
<div class="r" style="left:1291px;top:239px;width:1px;height:18px;background:#d9d9d9;"></div>
<div class="r" style="left:1380px;top:239px;width:1px;height:18px;background:#d9d9d9;"></div>
<div class="r" style="left:1473px;top:239px;width:1px;height:18px;background:#d2d2d2;"></div>
<div class="r" style="left:1578px;top:239px;width:1px;height:18px;background:#d2d2d2;"></div>
<div class="r" style="left:1753px;top:239px;width:1px;height:18px;background:#d9d9d9;"></div>
<div class="r" style="left:1827px;top:239px;width:1px;height:18px;background:#d9d9d9;"></div>
<div class="r" style="left:1881px;top:239px;width:1px;height:19px;background:#d9d9d9;"></div>
<div class="r" style="left:25px;top:241px;width:1px;height:18px;background:#d9d9d9;"></div>
<div class="r" style="left:0px;top:256.5px;width:1.5px;height:2px;background:#000;"></div>
<span class="t" style="left:52.83px;top:243.52px;font-size:12.5px;color:#333333;">A</span>
<span class="t" style="left:200.33px;top:243.52px;font-size:12.5px;color:#333333;">B</span>
<span class="t" style="left:423.99px;top:243.52px;font-size:12.5px;color:#333333;">C</span>
<span class="t" style="left:621.99px;top:243.52px;font-size:12.5px;color:#333333;">D</span>
<span class="t" style="left:807.33px;top:243.52px;font-size:12.5px;color:#333333;">E</span>
<span class="t" style="left:988.18px;top:243.52px;font-size:12.5px;color:#333333;">F</span>
<span class="t" style="left:1179.64px;top:243.52px;font-size:12.5px;color:#333333;">G</span>
<span class="t" style="left:1331.49px;top:243.52px;font-size:12.5px;color:#333333;">H</span>
<span class="t" style="left:1425.26px;top:243.52px;font-size:12.5px;color:#333333;">I</span>
<span class="t" style="left:1522.88px;top:243.52px;font-size:12.5px;color:#107c41;">J</span>
<span class="t" style="left:1661.83px;top:243.52px;font-size:12.5px;color:#333333;">K</span>
<span class="t" style="left:1787.02px;top:243.52px;font-size:12.5px;color:#333333;">L</span>
<span class="t" style="left:1849.29px;top:243.52px;font-size:12.5px;color:#333333;">M</span>
<div class="r" style="left:0px;top:259px;width:25px;height:245px;background:#f0f0f0;"></div>
<div class="r" style="left:25px;top:259px;width:1px;height:245px;background:#c8c8c8;"></div>
<div class="r" style="left:1828px;top:259px;width:70px;height:245px;background:#f3f3f3;"></div>
<div class="r" style="left:0px;top:318px;width:25px;height:1px;background:#dcdcdc;"></div>
<span class="t" style="left:9.32px;top:304.22px;font-size:12.5px;color:#333333;">1</span>
<div class="r" style="left:0px;top:338px;width:25px;height:1px;background:#dcdcdc;"></div>
<span class="t" style="left:9.32px;top:324.22px;font-size:12.5px;color:#333333;">2</span>
<div class="r" style="left:0px;top:358px;width:25px;height:1px;background:#dcdcdc;"></div>
<span class="t" style="left:9.32px;top:344.22px;font-size:12.5px;color:#333333;">3</span>
<div class="r" style="left:0px;top:359px;width:25px;height:20px;background:#e1e1e1;"></div>
<div class="r" style="left:24px;top:359px;width:2px;height:20px;background:#107c41;"></div>
<div class="r" style="left:0px;top:378px;width:25px;height:1px;background:#dcdcdc;"></div>
<span class="t" style="left:9.32px;top:364.22px;font-size:12.5px;color:#107c41;">4</span>
<div class="r" style="left:0px;top:398px;width:25px;height:1px;background:#dcdcdc;"></div>
<span class="t" style="left:9.32px;top:384.22px;font-size:12.5px;color:#333333;">5</span>
<div class="r" style="left:0px;top:418px;width:25px;height:1px;background:#dcdcdc;"></div>
<span class="t" style="left:9.32px;top:404.22px;font-size:12.5px;color:#333333;">6</span>
<div class="r" style="left:0px;top:438px;width:25px;height:1px;background:#dcdcdc;"></div>
<span class="t" style="left:9.32px;top:424.22px;font-size:12.5px;color:#333333;">7</span>
<div class="r" style="left:0px;top:458px;width:25px;height:1px;background:#dcdcdc;"></div>
<span class="t" style="left:9.32px;top:444.22px;font-size:12.5px;color:#333333;">8</span>
<div class="r" style="left:0px;top:478px;width:25px;height:1px;background:#dcdcdc;"></div>
<span class="t" style="left:9.32px;top:464.22px;font-size:12.5px;color:#333333;">9</span>
<div class="r" style="left:0px;top:498px;width:25px;height:1px;background:#dcdcdc;"></div>
<span class="t" style="left:5.85px;top:484.22px;font-size:12.5px;color:#333333;">10</span>
<div class="r" style="left:0px;top:518px;width:25px;height:1px;background:#dcdcdc;"></div>
<span class="t" style="left:6.31px;top:504.22px;font-size:12.5px;color:#333333;">11</span>
<div class="r" style="left:26px;top:259px;width:1802px;height:60px;background:#000000;"></div>
<div class="r" style="left:26px;top:319px;width:62px;height:185px;background:#fdf4ee;"></div>
<div class="r" style="left:89px;top:319px;width:231px;height:185px;background:#fdf4ee;"></div>
<div class="r" style="left:321px;top:319px;width:215px;height:185px;background:#fdf4ee;"></div>
<div class="r" style="left:537px;top:319px;width:179px;height:185px;background:#fdf4ee;"></div>
<div class="r" style="left:717px;top:319px;width:189px;height:185px;background:#ffffff;"></div>
<div class="r" style="left:907px;top:319px;width:170px;height:185px;background:#ffffff;"></div>
<div class="r" style="left:1078px;top:319px;width:213px;height:185px;background:#ffffff;"></div>
<div class="r" style="left:1292px;top:319px;width:88px;height:185px;background:#fdf4ee;"></div>
<div class="r" style="left:1381px;top:319px;width:92px;height:185px;background:#ffffff;"></div>
<div class="r" style="left:1474px;top:319px;width:104px;height:185px;background:#fdf4ee;"></div>
<div class="r" style="left:1579px;top:319px;width:174px;height:185px;background:#ffffff;"></div>
<div class="r" style="left:1754px;top:319px;width:73px;height:185px;background:#ffffff;"></div>
<div class="r" style="left:26px;top:338px;width:1802px;height:1px;background:#000000;"></div>
<div class="r" style="left:26px;top:358px;width:1802px;height:1px;background:#000000;"></div>
<div class="r" style="left:26px;top:378px;width:1802px;height:1px;background:#000000;"></div>
<div class="r" style="left:26px;top:398px;width:1802px;height:1px;background:#000000;"></div>
<div class="r" style="left:26px;top:418px;width:1802px;height:1px;background:#000000;"></div>
<div class="r" style="left:26px;top:438px;width:1802px;height:1px;background:#000000;"></div>
<div class="r" style="left:26px;top:458px;width:1802px;height:1px;background:#000000;"></div>
<div class="r" style="left:26px;top:478px;width:1802px;height:1px;background:#000000;"></div>
<div class="r" style="left:26px;top:498px;width:1802px;height:1px;background:#000000;"></div>
<div class="r" style="left:26px;top:518px;width:1802px;height:1px;background:#000000;"></div>
<div class="r" style="left:88px;top:319px;width:1px;height:185px;background:#000000;"></div>
<div class="r" style="left:320px;top:319px;width:1px;height:185px;background:#000000;"></div>
<div class="r" style="left:536px;top:319px;width:1px;height:185px;background:#000000;"></div>
<div class="r" style="left:716px;top:319px;width:1px;height:185px;background:#000000;"></div>
<div class="r" style="left:906px;top:319px;width:1px;height:185px;background:#000000;"></div>
<div class="r" style="left:1077px;top:319px;width:1px;height:185px;background:#000000;"></div>
<div class="r" style="left:1291px;top:319px;width:1px;height:185px;background:#000000;"></div>
<div class="r" style="left:1380px;top:319px;width:1px;height:185px;background:#000000;"></div>
<div class="r" style="left:1473px;top:319px;width:1px;height:185px;background:#000000;"></div>
<div class="r" style="left:1578px;top:319px;width:1px;height:185px;background:#000000;"></div>
<div class="r" style="left:1753px;top:319px;width:1px;height:185px;background:#000000;"></div>
<div class="r" style="left:1827px;top:319px;width:1px;height:185px;background:#000000;"></div>
<span class="t" style="left:44.06px;top:282.54px;font-size:13.3px;color:#ffffff;font-weight:bold;transform:scaleX(1.0707);transform-origin:center;">Mês</span>
<div class="r" style="left:71px;top:300px;width:17px;height:17px;background:linear-gradient(#fbfcfe,#e3e5ea);border:1px solid #b4b6bb;box-sizing:border-box;"></div>
<svg class="r" style="left:76px;top:307px;" width="7" height="4" viewBox="0 0 7 4"><path d="M0 0 H7 L3.5 4 Z" fill="#6a6a6a"/></svg>
<span class="t" style="left:179.01px;top:282.54px;font-size:13.3px;color:#ffffff;font-weight:bold;transform:scaleX(0.9849);transform-origin:center;">Produto</span>
<div class="r" style="left:303px;top:300px;width:17px;height:17px;background:linear-gradient(#fbfcfe,#e3e5ea);border:1px solid #b4b6bb;box-sizing:border-box;"></div>
<svg class="r" style="left:308px;top:307px;" width="7" height="4" viewBox="0 0 7 4"><path d="M0 0 H7 L3.5 4 Z" fill="#6a6a6a"/></svg>
<span class="t" style="left:346.85px;top:282.54px;font-size:13.3px;color:#ffffff;font-weight:bold;">Meta de Faturamento (R$)</span>
<div class="r" style="left:519px;top:300px;width:17px;height:17px;background:linear-gradient(#fbfcfe,#e3e5ea);border:1px solid #b4b6bb;box-sizing:border-box;"></div>
<svg class="r" style="left:524px;top:307px;" width="7" height="4" viewBox="0 0 7 4"><path d="M0 0 H7 L3.5 4 Z" fill="#6a6a6a"/></svg>
<span class="t" style="left:553.83px;top:282.54px;font-size:13.3px;color:#ffffff;font-weight:bold;transform:scaleX(0.9570);transform-origin:center;">Taxa de Conversão (%)</span>
<div class="r" style="left:699px;top:300px;width:17px;height:17px;background:linear-gradient(#fbfcfe,#e3e5ea);border:1px solid #b4b6bb;box-sizing:border-box;"></div>
<svg class="r" style="left:704px;top:307px;" width="7" height="4" viewBox="0 0 7 4"><path d="M0 0 H7 L3.5 4 Z" fill="#6a6a6a"/></svg>
<span class="t" style="left:730.72px;top:282.54px;font-size:13.3px;color:#ffffff;font-weight:bold;transform:scaleX(0.9817);transform-origin:center;">Ticket Médio Líquido (R$)</span>
<div class="r" style="left:889px;top:300px;width:17px;height:17px;background:linear-gradient(#fbfcfe,#e3e5ea);border:1px solid #b4b6bb;box-sizing:border-box;"></div>
<svg class="r" style="left:894px;top:307px;" width="7" height="4" viewBox="0 0 7 4"><path d="M0 0 H7 L3.5 4 Z" fill="#6a6a6a"/></svg>
<span class="t" style="left:928.04px;top:282.54px;font-size:13.3px;color:#ffffff;font-weight:bold;transform:scaleX(0.9592);transform-origin:center;">Vendas Necessárias</span>
<div class="r" style="left:1060px;top:300px;width:17px;height:17px;background:linear-gradient(#fbfcfe,#e3e5ea);border:1px solid #b4b6bb;box-sizing:border-box;"></div>
<svg class="r" style="left:1065px;top:307px;" width="7" height="4" viewBox="0 0 7 4"><path d="M0 0 H7 L3.5 4 Z" fill="#6a6a6a"/></svg>
<span class="t" style="left:1085.21px;top:282.54px;font-size:13.3px;color:#ffffff;font-weight:bold;transform:scaleX(0.9704);transform-origin:center;">Visitantes na Página de Vendas</span>
<div class="r" style="left:1274px;top:300px;width:17px;height:17px;background:linear-gradient(#fbfcfe,#e3e5ea);border:1px solid #b4b6bb;box-sizing:border-box;"></div>
<svg class="r" style="left:1279px;top:307px;" width="7" height="4" viewBox="0 0 7 4"><path d="M0 0 H7 L3.5 4 Z" fill="#6a6a6a"/></svg>
<span class="t" style="left:1301.28px;top:282.54px;font-size:13.3px;color:#ffffff;font-weight:bold;transform:scaleX(0.9706);transform-origin:center;">CTR Médio</span>
<div class="r" style="left:1363px;top:300px;width:17px;height:17px;background:linear-gradient(#fbfcfe,#e3e5ea);border:1px solid #b4b6bb;box-sizing:border-box;"></div>
<svg class="r" style="left:1368px;top:307px;" width="7" height="4" viewBox="0 0 7 4"><path d="M0 0 H7 L3.5 4 Z" fill="#6a6a6a"/></svg>
<span class="t" style="left:1390.04px;top:282.54px;font-size:13.3px;color:#ffffff;font-weight:bold;transform:scaleX(0.9631);transform-origin:center;">Impressões</span>
<div class="r" style="left:1456px;top:300px;width:17px;height:17px;background:linear-gradient(#fbfcfe,#e3e5ea);border:1px solid #b4b6bb;box-sizing:border-box;"></div>
<svg class="r" style="left:1461px;top:307px;" width="7" height="4" viewBox="0 0 7 4"><path d="M0 0 H7 L3.5 4 Z" fill="#6a6a6a"/></svg>
<span class="t" style="left:1490.17px;top:282.54px;font-size:13.3px;color:#ffffff;font-weight:bold;transform:scaleX(1.0186);transform-origin:center;">CPM Médio</span>
<div class="r" style="left:1561px;top:300px;width:17px;height:17px;background:linear-gradient(#fbfcfe,#e3e5ea);border:1px solid #b4b6bb;box-sizing:border-box;"></div>
<svg class="r" style="left:1566px;top:307px;" width="7" height="4" viewBox="0 0 7 4"><path d="M0 0 H7 L3.5 4 Z" fill="#6a6a6a"/></svg>
<span class="t" style="left:1624.99px;top:262.54px;font-size:13.3px;color:#ffffff;font-weight:bold;transform:scaleX(1.0192);transform-origin:center;">Investimento</span>
<span class="t" style="left:1588.39px;top:282.54px;font-size:13.3px;color:#ffffff;font-weight:bold;transform:scaleX(0.9677);transform-origin:center;">Recomendado c/ 12,15%</span>
<span class="t" style="left:1636.44px;top:302.54px;font-size:13.3px;color:#ffffff;font-weight:bold;transform:scaleX(0.9677);transform-origin:center;">impostos</span>
<div class="r" style="left:1736px;top:300px;width:17px;height:17px;background:linear-gradient(#fbfcfe,#e3e5ea);border:1px solid #b4b6bb;box-sizing:border-box;"></div>
<svg class="r" style="left:1741px;top:307px;" width="7" height="4" viewBox="0 0 7 4"><path d="M0 0 H7 L3.5 4 Z" fill="#6a6a6a"/></svg>
<span class="t" style="left:1776.95px;top:282.54px;font-size:13.3px;color:#ffffff;font-weight:bold;transform:scaleX(0.9781);transform-origin:center;">CPA</span>
<div class="r" style="left:1810px;top:300px;width:17px;height:17px;background:linear-gradient(#fbfcfe,#e3e5ea);border:1px solid #b4b6bb;box-sizing:border-box;"></div>
<svg class="r" style="left:1815px;top:307px;" width="7" height="4" viewBox="0 0 7 4"><path d="M0 0 H7 L3.5 4 Z" fill="#6a6a6a"/></svg>
<span class="t d" style="left:78.49px;top:322.57px;font-size:13.5px;color:#000000;transform:scaleX(0.9460);transform-origin:right;">1</span>
<span class="t d" style="left:91.40px;top:322.57px;font-size:13.5px;color:#000000;transform:scaleX(1.0118);transform-origin:left;">Produto 1</span>
<span class="t d" style="left:328.60px;top:322.57px;font-size:13.5px;color:#000000;transform:scaleX(0.8300);transform-origin:left;">R$</span>
<span class="t d" style="left:468.45px;top:322.57px;font-size:13.5px;color:#000000;transform:scaleX(0.9449);transform-origin:right;">10.000,00</span>
<span class="t d" style="left:675.72px;top:322.57px;font-size:13.5px;color:#000000;transform:scaleX(0.9097);transform-origin:right;">2,00%</span>
<span class="t d" style="left:724.60px;top:322.57px;font-size:13.5px;color:#000000;transform:scaleX(0.8300);transform-origin:left;">R$</span>
<span class="t d" style="left:856.91px;top:322.57px;font-size:13.5px;color:#000000;transform:scaleX(0.9448);transform-origin:right;">416,95</span>
<span class="t d" style="left:1040.62px;top:322.57px;font-size:13.5px;color:#000000;transform:scaleX(0.9446);transform-origin:right;">23,98</span>
<span class="t d" style="left:1259.97px;top:322.57px;font-size:13.5px;color:#000000;transform:scaleX(0.9786);transform-origin:right;">1199</span>
<span class="t d" style="left:1339.02px;top:322.57px;font-size:13.5px;color:#000000;transform:scaleX(0.9097);transform-origin:right;">1,20%</span>
<span class="t d" style="left:1432.66px;top:322.57px;font-size:13.5px;color:#000000;transform:scaleX(0.9460);transform-origin:right;">99931</span>
<span class="t d" style="left:1481.40px;top:322.57px;font-size:13.5px;color:#000000;transform:scaleX(0.8300);transform-origin:left;">R$</span>
<span class="t d" style="left:1536.22px;top:322.57px;font-size:13.5px;color:#000000;transform:scaleX(0.9446);transform-origin:right;">52,85</span>
<span class="t d" style="left:1586.40px;top:322.57px;font-size:13.5px;color:#000000;transform:scaleX(0.8300);transform-origin:left;">R$</span>
<span class="t d" style="left:1692.96px;top:322.57px;font-size:13.5px;color:#000000;transform:scaleX(0.9447);transform-origin:right;">5.923,04</span>
<span class="t d" style="left:1761.40px;top:322.57px;font-size:13.5px;color:#000000;transform:scaleX(0.8300);transform-origin:left;">R$</span>
<span class="t d" style="left:1778.21px;top:322.57px;font-size:13.5px;color:#000000;transform:scaleX(0.9448);transform-origin:right;">246,96</span>
<span class="t d" style="left:78.49px;top:342.57px;font-size:13.5px;color:#000000;transform:scaleX(0.9460);transform-origin:right;">1</span>
<span class="t d" style="left:91.40px;top:342.57px;font-size:13.5px;color:#000000;transform:scaleX(1.0118);transform-origin:left;">Produto 2</span>
<span class="t d" style="left:328.60px;top:342.57px;font-size:13.5px;color:#000000;transform:scaleX(0.8300);transform-origin:left;">R$</span>
<span class="t d" style="left:468.45px;top:342.57px;font-size:13.5px;color:#000000;transform:scaleX(0.9449);transform-origin:right;">20.000,00</span>
<span class="t d" style="left:675.72px;top:342.57px;font-size:13.5px;color:#000000;transform:scaleX(0.9097);transform-origin:right;">2,10%</span>
<span class="t d" style="left:724.60px;top:342.57px;font-size:13.5px;color:#000000;transform:scaleX(0.8300);transform-origin:left;">R$</span>
<span class="t d" style="left:856.91px;top:342.57px;font-size:13.5px;color:#000000;transform:scaleX(0.9448);transform-origin:right;">634,96</span>
<span class="t d" style="left:1040.62px;top:342.57px;font-size:13.5px;color:#000000;transform:scaleX(0.9446);transform-origin:right;">31,50</span>
<span class="t d" style="left:1258.97px;top:342.57px;font-size:13.5px;color:#000000;transform:scaleX(0.9460);transform-origin:right;">1500</span>
<span class="t d" style="left:1339.02px;top:342.57px;font-size:13.5px;color:#000000;transform:scaleX(0.9097);transform-origin:right;">1,10%</span>
<span class="t d" style="left:1425.16px;top:342.57px;font-size:13.5px;color:#000000;transform:scaleX(0.9460);transform-origin:right;">136355</span>
<span class="t d" style="left:1481.40px;top:342.57px;font-size:13.5px;color:#000000;transform:scaleX(0.8300);transform-origin:left;">R$</span>
<span class="t d" style="left:1536.22px;top:342.57px;font-size:13.5px;color:#000000;transform:scaleX(0.9446);transform-origin:right;">63,52</span>
<span class="t d" style="left:1586.40px;top:342.57px;font-size:13.5px;color:#000000;transform:scaleX(0.8300);transform-origin:left;">R$</span>
<span class="t d" style="left:1692.96px;top:342.57px;font-size:13.5px;color:#000000;transform:scaleX(0.9447);transform-origin:right;">9.713,60</span>
<span class="t d" style="left:1761.40px;top:342.57px;font-size:13.5px;color:#000000;transform:scaleX(0.8300);transform-origin:left;">R$</span>
<span class="t d" style="left:1778.21px;top:342.57px;font-size:13.5px;color:#000000;transform:scaleX(0.9448);transform-origin:right;">308,39</span>
<span class="t d" style="left:78.49px;top:362.57px;font-size:13.5px;color:#000000;transform:scaleX(0.9460);transform-origin:right;">1</span>
<span class="t d" style="left:91.40px;top:362.57px;font-size:13.5px;color:#000000;transform:scaleX(1.0118);transform-origin:left;">Produto 3</span>
<span class="t d" style="left:328.60px;top:362.57px;font-size:13.5px;color:#000000;transform:scaleX(0.8300);transform-origin:left;">R$</span>
<span class="t d" style="left:475.96px;top:362.57px;font-size:13.5px;color:#000000;transform:scaleX(0.9447);transform-origin:right;">5.000,00</span>
<span class="t d" style="left:675.72px;top:362.57px;font-size:13.5px;color:#000000;transform:scaleX(0.9097);transform-origin:right;">2,60%</span>
<span class="t d" style="left:724.60px;top:362.57px;font-size:13.5px;color:#000000;transform:scaleX(0.8300);transform-origin:left;">R$</span>
<span class="t d" style="left:856.91px;top:362.57px;font-size:13.5px;color:#000000;transform:scaleX(0.9448);transform-origin:right;">270,39</span>
<span class="t d" style="left:1040.62px;top:362.57px;font-size:13.5px;color:#000000;transform:scaleX(0.9446);transform-origin:right;">18,49</span>
<span class="t d" style="left:1267.48px;top:362.57px;font-size:13.5px;color:#000000;transform:scaleX(0.9900);transform-origin:right;">711</span>
<span class="t d" style="left:1339.02px;top:362.57px;font-size:13.5px;color:#000000;transform:scaleX(0.9097);transform-origin:right;">1,00%</span>
<span class="t d" style="left:1433.67px;top:362.57px;font-size:13.5px;color:#000000;transform:scaleX(0.9719);transform-origin:right;">71121</span>
<span class="t d" style="left:1481.40px;top:362.57px;font-size:13.5px;color:#000000;transform:scaleX(0.8300);transform-origin:left;">R$</span>
<span class="t d" style="left:1536.22px;top:362.57px;font-size:13.5px;color:#000000;transform:scaleX(0.9446);transform-origin:right;">40,00</span>
<span class="t d" style="left:1586.40px;top:362.57px;font-size:13.5px;color:#000000;transform:scaleX(0.8300);transform-origin:left;">R$</span>
<span class="t d" style="left:1692.96px;top:362.57px;font-size:13.5px;color:#000000;transform:scaleX(0.9447);transform-origin:right;">3.190,50</span>
<span class="t d" style="left:1761.40px;top:362.57px;font-size:13.5px;color:#000000;transform:scaleX(0.8300);transform-origin:left;">R$</span>
<span class="t d" style="left:1778.21px;top:362.57px;font-size:13.5px;color:#000000;transform:scaleX(0.9448);transform-origin:right;">172,54</span>
<span class="t d" style="left:724.60px;top:382.57px;font-size:13.5px;color:#000000;transform:scaleX(0.8300);transform-origin:left;">R$</span>
<span class="t" style="left:879.75px;top:382.57px;font-size:13.5px;color:#000000;">-</span>
<span class="t d" style="left:1048.13px;top:382.57px;font-size:13.5px;color:#000000;transform:scaleX(0.9442);transform-origin:right;">0,00</span>
<span class="t d" style="left:1281.49px;top:382.57px;font-size:13.5px;color:#000000;transform:scaleX(0.9460);transform-origin:right;">0</span>
<span class="t d" style="left:1339.02px;top:382.57px;font-size:13.5px;color:#000000;transform:scaleX(0.9097);transform-origin:right;">0,00%</span>
<span class="t d" style="left:1462.69px;top:382.57px;font-size:13.5px;color:#000000;transform:scaleX(0.9460);transform-origin:right;">0</span>
<span class="t d" style="left:1481.40px;top:382.57px;font-size:13.5px;color:#000000;transform:scaleX(0.8300);transform-origin:left;">R$</span>
<span class="t d" style="left:1536.22px;top:382.57px;font-size:13.5px;color:#000000;transform:scaleX(0.9446);transform-origin:right;">40,00</span>
<span class="t d" style="left:1586.40px;top:382.57px;font-size:13.5px;color:#000000;transform:scaleX(0.8300);transform-origin:left;">R$</span>
<span class="t" style="left:1727.05px;top:382.57px;font-size:13.5px;color:#000000;">-</span>
<span class="t d" style="left:1761.40px;top:382.57px;font-size:13.5px;color:#000000;transform:scaleX(0.8300);transform-origin:left;">R$</span>
<span class="t" style="left:1800.95px;top:382.57px;font-size:13.5px;color:#000000;">-</span>
<span class="t d" style="left:724.60px;top:402.57px;font-size:13.5px;color:#000000;transform:scaleX(0.8300);transform-origin:left;">R$</span>
<span class="t" style="left:879.75px;top:402.57px;font-size:13.5px;color:#000000;">-</span>
<span class="t d" style="left:1048.13px;top:402.57px;font-size:13.5px;color:#000000;transform:scaleX(0.9442);transform-origin:right;">0,00</span>
<span class="t d" style="left:1281.49px;top:402.57px;font-size:13.5px;color:#000000;transform:scaleX(0.9460);transform-origin:right;">0</span>
<span class="t d" style="left:1339.02px;top:402.57px;font-size:13.5px;color:#000000;transform:scaleX(0.9097);transform-origin:right;">0,00%</span>
<span class="t d" style="left:1462.69px;top:402.57px;font-size:13.5px;color:#000000;transform:scaleX(0.9460);transform-origin:right;">0</span>
<span class="t d" style="left:1481.40px;top:402.57px;font-size:13.5px;color:#000000;transform:scaleX(0.8300);transform-origin:left;">R$</span>
<span class="t d" style="left:1536.22px;top:402.57px;font-size:13.5px;color:#000000;transform:scaleX(0.9446);transform-origin:right;">40,00</span>
<span class="t d" style="left:1586.40px;top:402.57px;font-size:13.5px;color:#000000;transform:scaleX(0.8300);transform-origin:left;">R$</span>
<span class="t" style="left:1727.05px;top:402.57px;font-size:13.5px;color:#000000;">-</span>
<span class="t d" style="left:1761.40px;top:402.57px;font-size:13.5px;color:#000000;transform:scaleX(0.8300);transform-origin:left;">R$</span>
<span class="t" style="left:1800.95px;top:402.57px;font-size:13.5px;color:#000000;">-</span>
<span class="t d" style="left:724.60px;top:422.57px;font-size:13.5px;color:#000000;transform:scaleX(0.8300);transform-origin:left;">R$</span>
<span class="t" style="left:879.75px;top:422.57px;font-size:13.5px;color:#000000;">-</span>
<span class="t d" style="left:1048.13px;top:422.57px;font-size:13.5px;color:#000000;transform:scaleX(0.9442);transform-origin:right;">0,00</span>
<span class="t d" style="left:1281.49px;top:422.57px;font-size:13.5px;color:#000000;transform:scaleX(0.9460);transform-origin:right;">0</span>
<span class="t d" style="left:1339.02px;top:422.57px;font-size:13.5px;color:#000000;transform:scaleX(0.9097);transform-origin:right;">0,00%</span>
<span class="t d" style="left:1462.69px;top:422.57px;font-size:13.5px;color:#000000;transform:scaleX(0.9460);transform-origin:right;">0</span>
<span class="t d" style="left:1481.40px;top:422.57px;font-size:13.5px;color:#000000;transform:scaleX(0.8300);transform-origin:left;">R$</span>
<span class="t d" style="left:1536.22px;top:422.57px;font-size:13.5px;color:#000000;transform:scaleX(0.9446);transform-origin:right;">40,00</span>
<span class="t d" style="left:1586.40px;top:422.57px;font-size:13.5px;color:#000000;transform:scaleX(0.8300);transform-origin:left;">R$</span>
<span class="t" style="left:1727.05px;top:422.57px;font-size:13.5px;color:#000000;">-</span>
<span class="t d" style="left:1761.40px;top:422.57px;font-size:13.5px;color:#000000;transform:scaleX(0.8300);transform-origin:left;">R$</span>
<span class="t" style="left:1800.95px;top:422.57px;font-size:13.5px;color:#000000;">-</span>
<span class="t d" style="left:724.60px;top:442.57px;font-size:13.5px;color:#000000;transform:scaleX(0.8300);transform-origin:left;">R$</span>
<span class="t" style="left:879.75px;top:442.57px;font-size:13.5px;color:#000000;">-</span>
<span class="t d" style="left:1048.13px;top:442.57px;font-size:13.5px;color:#000000;transform:scaleX(0.9442);transform-origin:right;">0,00</span>
<span class="t d" style="left:1281.49px;top:442.57px;font-size:13.5px;color:#000000;transform:scaleX(0.9460);transform-origin:right;">0</span>
<span class="t d" style="left:1339.02px;top:442.57px;font-size:13.5px;color:#000000;transform:scaleX(0.9097);transform-origin:right;">0,00%</span>
<span class="t d" style="left:1462.69px;top:442.57px;font-size:13.5px;color:#000000;transform:scaleX(0.9460);transform-origin:right;">0</span>
<span class="t d" style="left:1481.40px;top:442.57px;font-size:13.5px;color:#000000;transform:scaleX(0.8300);transform-origin:left;">R$</span>
<span class="t d" style="left:1536.22px;top:442.57px;font-size:13.5px;color:#000000;transform:scaleX(0.9446);transform-origin:right;">40,00</span>
<span class="t d" style="left:1586.40px;top:442.57px;font-size:13.5px;color:#000000;transform:scaleX(0.8300);transform-origin:left;">R$</span>
<span class="t" style="left:1727.05px;top:442.57px;font-size:13.5px;color:#000000;">-</span>
<span class="t d" style="left:1761.40px;top:442.57px;font-size:13.5px;color:#000000;transform:scaleX(0.8300);transform-origin:left;">R$</span>
<span class="t" style="left:1800.95px;top:442.57px;font-size:13.5px;color:#000000;">-</span>
<span class="t d" style="left:724.60px;top:462.57px;font-size:13.5px;color:#000000;transform:scaleX(0.8300);transform-origin:left;">R$</span>
<span class="t" style="left:879.75px;top:462.57px;font-size:13.5px;color:#000000;">-</span>
<span class="t d" style="left:1048.13px;top:462.57px;font-size:13.5px;color:#000000;transform:scaleX(0.9442);transform-origin:right;">0,00</span>
<span class="t d" style="left:1281.49px;top:462.57px;font-size:13.5px;color:#000000;transform:scaleX(0.9460);transform-origin:right;">0</span>
<span class="t d" style="left:1339.02px;top:462.57px;font-size:13.5px;color:#000000;transform:scaleX(0.9097);transform-origin:right;">0,00%</span>
<span class="t d" style="left:1462.69px;top:462.57px;font-size:13.5px;color:#000000;transform:scaleX(0.9460);transform-origin:right;">0</span>
<span class="t d" style="left:1481.40px;top:462.57px;font-size:13.5px;color:#000000;transform:scaleX(0.8300);transform-origin:left;">R$</span>
<span class="t d" style="left:1536.22px;top:462.57px;font-size:13.5px;color:#000000;transform:scaleX(0.9446);transform-origin:right;">40,00</span>
<span class="t d" style="left:1586.40px;top:462.57px;font-size:13.5px;color:#000000;transform:scaleX(0.8300);transform-origin:left;">R$</span>
<span class="t" style="left:1727.05px;top:462.57px;font-size:13.5px;color:#000000;">-</span>
<span class="t d" style="left:1761.40px;top:462.57px;font-size:13.5px;color:#000000;transform:scaleX(0.8300);transform-origin:left;">R$</span>
<span class="t" style="left:1800.95px;top:462.57px;font-size:13.5px;color:#000000;">-</span>
<span class="t d" style="left:724.60px;top:482.57px;font-size:13.5px;color:#000000;transform:scaleX(0.8300);transform-origin:left;">R$</span>
<span class="t" style="left:879.75px;top:482.57px;font-size:13.5px;color:#000000;">-</span>
<span class="t d" style="left:1048.13px;top:482.57px;font-size:13.5px;color:#000000;transform:scaleX(0.9442);transform-origin:right;">0,00</span>
<span class="t d" style="left:1281.49px;top:482.57px;font-size:13.5px;color:#000000;transform:scaleX(0.9460);transform-origin:right;">0</span>
<span class="t d" style="left:1339.02px;top:482.57px;font-size:13.5px;color:#000000;transform:scaleX(0.9097);transform-origin:right;">0,00%</span>
<span class="t d" style="left:1462.69px;top:482.57px;font-size:13.5px;color:#000000;transform:scaleX(0.9460);transform-origin:right;">0</span>
<span class="t d" style="left:1481.40px;top:482.57px;font-size:13.5px;color:#000000;transform:scaleX(0.8300);transform-origin:left;">R$</span>
<span class="t d" style="left:1536.22px;top:482.57px;font-size:13.5px;color:#000000;transform:scaleX(0.9446);transform-origin:right;">40,00</span>
<span class="t d" style="left:1586.40px;top:482.57px;font-size:13.5px;color:#000000;transform:scaleX(0.8300);transform-origin:left;">R$</span>
<span class="t" style="left:1727.05px;top:482.57px;font-size:13.5px;color:#000000;">-</span>
<span class="t d" style="left:1761.40px;top:482.57px;font-size:13.5px;color:#000000;transform:scaleX(0.8300);transform-origin:left;">R$</span>
<span class="t" style="left:1800.95px;top:482.57px;font-size:13.5px;color:#000000;">-</span>
<span class="t d" style="left:724.60px;top:502.57px;font-size:13.5px;color:#000000;transform:scaleX(0.8300);transform-origin:left;">R$</span>
<span class="t" style="left:879.75px;top:502.57px;font-size:13.5px;color:#000000;">-</span>
<span class="t d" style="left:1048.13px;top:502.57px;font-size:13.5px;color:#000000;transform:scaleX(0.9442);transform-origin:right;">0,00</span>
<span class="t d" style="left:1281.49px;top:502.57px;font-size:13.5px;color:#000000;transform:scaleX(0.9460);transform-origin:right;">0</span>
<span class="t d" style="left:1339.02px;top:502.57px;font-size:13.5px;color:#000000;transform:scaleX(0.9097);transform-origin:right;">0,00%</span>
<span class="t d" style="left:1462.69px;top:502.57px;font-size:13.5px;color:#000000;transform:scaleX(0.9460);transform-origin:right;">0</span>
<span class="t d" style="left:1481.40px;top:502.57px;font-size:13.5px;color:#000000;transform:scaleX(0.8300);transform-origin:left;">R$</span>
<span class="t d" style="left:1536.22px;top:502.57px;font-size:13.5px;color:#000000;transform:scaleX(0.9446);transform-origin:right;">40,00</span>
<span class="t d" style="left:1586.40px;top:502.57px;font-size:13.5px;color:#000000;transform:scaleX(0.8300);transform-origin:left;">R$</span>
<span class="t" style="left:1727.05px;top:502.57px;font-size:13.5px;color:#000000;">-</span>
<span class="t d" style="left:1761.40px;top:502.57px;font-size:13.5px;color:#000000;transform:scaleX(0.8300);transform-origin:left;">R$</span>
<span class="t" style="left:1800.95px;top:502.57px;font-size:13.5px;color:#000000;">-</span>
<div class="r" style="left:736px;top:503px;width:1.2px;height:1px;background:#333;"></div>
<div class="r" style="left:1493px;top:503px;width:1.2px;height:1px;background:#333;"></div>
<div class="r" style="left:1598px;top:503px;width:1.2px;height:1px;background:#333;"></div>
<div class="r" style="left:1773px;top:503px;width:1.2px;height:1px;background:#333;"></div>
<div class="r" style="left:1472px;top:357px;width:108px;height:22px;background:transparent;border:2px solid #107c41;box-sizing:border-box;"></div>
<div class="r" style="left:1576px;top:376px;width:5px;height:5px;background:#107c41;border:1px solid #fff;box-sizing:content-box;"></div>
<div class="r" style="left:1901px;top:239px;width:17px;height:265px;background:#f7f7f7;border-radius:8px;"></div>
<svg class="r" style="left:1905px;top:244px;" width="9" height="7" viewBox="0 0 9 7"><path d="M4.5 0.5 L8.8 6.5 H0.2 Z" fill="#707070" stroke="#707070" stroke-width=".6" stroke-linejoin="round"/></svg>
<div class="r" style="left:1905px;top:256px;width:9px;height:260px;background:#707070;border-radius:4.5px;"></div>
</body></html>
